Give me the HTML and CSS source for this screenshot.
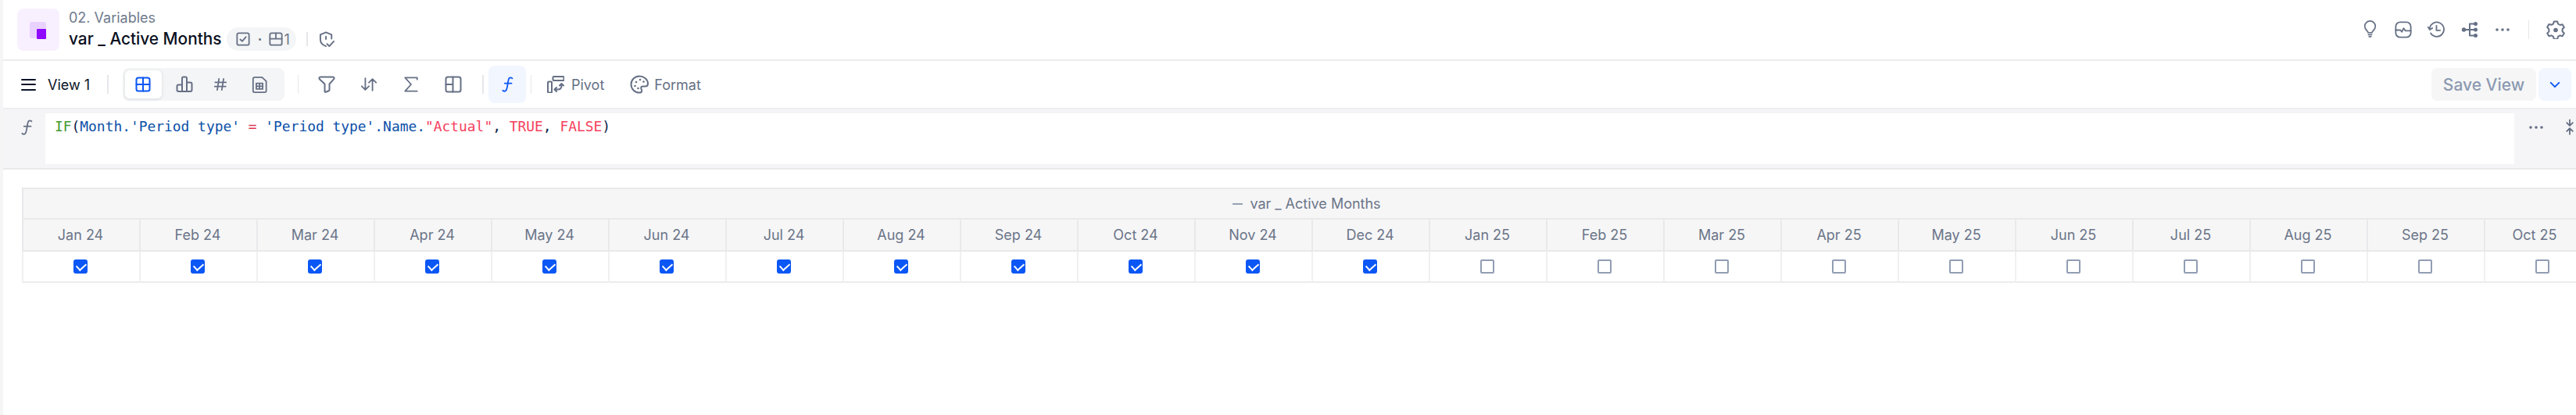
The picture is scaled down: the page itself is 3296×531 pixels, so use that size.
FILE: index.html
```html
<!DOCTYPE html>
<html lang="en">
<head>
<meta charset="utf-8">
<title>var _ Active Months</title>
<link rel="stylesheet" href="styles.css">
</head>
<body>
<svg class="defs" aria-hidden="true">
  <symbol id="i-grid" viewBox="0 0 20 20"><rect x="1.500" y="1.500" width="17" height="17" rx="2.500"/><path d="M10 1.500v17M1.500 10h17"/></symbol>
  <symbol id="i-bars" viewBox="0 0 22 22"><path d="M8 20V11.500H3.500a2 2 0 0 0-2 2V18a2 2 0 0 0 2 2H8zM8 20V3a1.500 1.500 0 0 1 1.500-1.500h3A1.500 1.500 0 0 1 14 3v17M14 8.500h4.500a2 2 0 0 1 2 2V18a2 2 0 0 1-2 2H14M8 20h6"/></symbol>
  <symbol id="i-hash" viewBox="0 0 20 20"><path d="M8 2 5.500 18M14.500 2 12 18M2.500 7H18M2 13h15.500"/></symbol>
  <symbol id="i-sheet" viewBox="0 0 22 24"><path d="M4 1.500h10.500L20.500 7v13.500a2 2 0 0 1-2 2H4a2 2 0 0 1-2-2v-17a2 2 0 0 1 2-2z"/><path d="M6.500 10h9v8h-9zM11 10v8M6.500 14h9"/></symbol>
  <symbol id="i-filter" viewBox="0 0 22 22"><path d="M3 1.500h16c1.500 0 2 1.500 1.200 2.700l-5.700 6.300v7.500c0 .6-.3 1-.8 1.200l-4 1.600c-.6.200-1.200-.2-1.200-.9V10.500L1.800 4.200C1 3 1.500 1.500 3 1.500z"/></symbol>
  <symbol id="i-sort" viewBox="0 0 24 20"><path d="M7 1.500v16M2 12.500l5 5 5-5M17 18.500v-16M12 7.500l5-5 5 5"/></symbol>
  <symbol id="i-sigma" viewBox="0 0 20 22"><path d="M18.500 4V1.500h-17L10 11l-8.500 9.500h17"/></symbol>
  <symbol id="i-layout" viewBox="0 0 22 22"><rect x="1.500" y="1.500" width="19" height="19" rx="2.500"/><path d="M10.500 1.500v19M1.500 11h9"/></symbol>
  <symbol id="i-fx" viewBox="0 0 16 22"><path d="M14.500 2.500C13.500 1.200 11 1 10 2.500 9 4 8.500 8 7.800 12.500 7.200 16.500 6.800 19 5 20.200c-1.200.8-3 .5-3.700-.7M4 9.500h9.500"/></symbol>
  <symbol id="i-pivot" viewBox="0 0 22 22"><rect x="7.500" y="1" width="14" height="5" rx="1"/><rect x="1" y="7.500" width="5" height="14" rx="1"/><path d="M10 17.500h3.500c3 0 5-1.500 5-5v-2M16 12.500l2.500-2.500 2.500 2.500M12 15l-2.500 2.500L12 20"/></symbol>
  <symbol id="i-shield" viewBox="0 0 22 22"><path d="M9.500 20C5 18.500 2 15.500 2 11V4.500L9.500 1.500 17 4.500V10M9.500 7v3.500M11 17l3 3 6-6.500"/></symbol>
  <symbol id="i-check" viewBox="0 0 20 20"><rect x="1.500" y="1.500" width="17" height="17" rx="2.500"/><path d="M6 10.500l3 2.500 5-6"/></symbol>
  <symbol id="i-split" viewBox="0 0 20 20"><rect x="1.500" y="1.500" width="17" height="17" rx="2.500"/><path d="M1.500 9.500h17M10 1.500v8"/></symbol>
  <symbol id="i-bulb" viewBox="0 0 20 24"><path d="M7 17c0-2.500-5-4.500-5-9.500a8 8 0 0 1 16 0c0 5-5 7-5 9.500zM7.500 20h5M8.500 23h3"/></symbol>
  <symbol id="i-pulse" viewBox="0 0 24 24"><rect x="1.500" y="1.500" width="21" height="21" rx="6"/><path d="M1.500 12.500h6.500l2 2.500 2.500-5 2.500 3.500h7.500"/></symbol>
  <symbol id="i-history" viewBox="0 0 24 24"><path d="M3 10.500a10 10 0 1 1 1.500 6.500M.8 8.500 3.200 12l3.500-2.200M12.500 6.500v6.500h5"/></symbol>
  <symbol id="i-tree" viewBox="0 0 22 22"><circle cx="3.500" cy="11" r="2.700" class="fill"/><circle cx="18.500" cy="3.500" r="2.500" class="fill"/><circle cx="18.500" cy="11" r="2.500" class="fill"/><circle cx="18.500" cy="18.500" r="2.500" class="fill"/><path d="M3.500 11h15M18.500 3.500H11v15h7.500"/></symbol>
  <symbol id="i-dots" viewBox="0 0 18 4"><circle cx="2" cy="2" r="1.800" class="fill"/><circle cx="9" cy="2" r="1.800" class="fill"/><circle cx="16" cy="2" r="1.800" class="fill"/></symbol>
  <symbol id="i-gear" viewBox="0 0 24 24"><path d="M9.800 1.500h4.400l.8 3 2.600 1.500 3-.8 2.200 3.800-2.200 2.200v3l2.200 2.200-2.200 3.800-3-.8-2.600 1.500-.8 3H9.800l-.8-3-2.600-1.500-3 .8L1.200 16.600 3.400 14.400v-3L1.200 8.800l2.200-3.800 3 .8L9 4.500z"/><circle cx="12" cy="12.500" r="2.800" class="fill"/></symbol>
  <symbol id="i-compress" viewBox="0 0 12 22"><path d="M6 0v8M1.500 4.500 6 9l4.500-4.500M6 22v-8M1.500 17.500 6 13l4.500 4.500"/></symbol>
</svg>

<div class="app">
  <header class="head">
    <div class="logo"><span class="logo-back"><span class="logo-front"></span></span></div>
    <div class="names">
      <div class="crumb">02. Variables</div>
      <div class="title-row">
        <h1 class="title">var _ Active Months</h1>
        <div class="chip">
          <svg class="ic ic-18"><use href="#i-check"/></svg>
          <span class="chip-dot">·</span>
          <svg class="ic ic-18"><use href="#i-split"/></svg>
          <span class="chip-num">1</span>
        </div>
        <span class="sep sep-head"></span>
        <svg class="ic ic-shield"><use href="#i-shield"/></svg>
      </div>
    </div>
    <div class="head-tools">
      <span class="tool-h"><svg class="ic ic-bulb"><use href="#i-bulb"/></svg></span>
      <span class="tool-h"><svg class="ic ic-22"><use href="#i-pulse"/></svg></span>
      <span class="tool-h"><svg class="ic ic-22"><use href="#i-history"/></svg></span>
      <span class="tool-h"><svg class="ic ic-22"><use href="#i-tree"/></svg></span>
      <span class="tool-h"><svg class="ic ic-dots"><use href="#i-dots"/></svg></span>
      <span class="sep sep-tools"></span>
      <span class="tool-h"><svg class="ic ic-24"><use href="#i-gear"/></svg></span>
    </div>
  </header>

  <nav class="bar">
    <span class="burger"><i></i><i></i><i></i></span>
    <span class="view-name">View 1</span>
    <span class="sep sep-view"></span>
    <div class="seg">
      <span class="seg-btn on"><svg class="ic ic-20 blue"><use href="#i-grid"/></svg></span>
      <span class="seg-btn b2"><svg class="ic ic-22"><use href="#i-bars"/></svg></span>
      <span class="seg-btn b3"><svg class="ic ic-18"><use href="#i-hash"/></svg></span>
      <span class="seg-btn b4"><svg class="ic ic-sheet"><use href="#i-sheet"/></svg></span>
    </div>
    <span class="sep sep-seg"></span>
    <span class="tool"><svg class="ic ic-22"><use href="#i-filter"/></svg></span>
    <span class="tool"><svg class="ic ic-sort"><use href="#i-sort"/></svg></span>
    <span class="tool"><svg class="ic ic-20"><use href="#i-sigma"/></svg></span>
    <span class="tool"><svg class="ic ic-22"><use href="#i-layout"/></svg></span>
    <span class="sep sep-fx1"></span>
    <span class="fx-btn"><svg class="ic ic-fx blue"><use href="#i-fx"/></svg></span>
    <span class="sep sep-fx2"></span>
    <span class="label-btn pivot"><svg class="ic ic-22"><use href="#i-pivot"/></svg>Pivot</span>
    <span class="label-btn format"><svg class="ic ic-24" viewBox="0 0 24 24"><path d="M12 1.500a10.500 10.500 0 1 0 0 21c2 0 3.200-1.200 3.200-2.600 0-1.500-1-2-1-3.200 0-1.300 1-2.200 2.400-2.200h3c2 0 3.400-1.500 3.400-3.500 0-5.500-5-9.500-11-9.500z"/><circle class="pal" cx="8" cy="9" r="1.300"/><circle class="pal" cx="13" cy="6" r="1.300"/><circle class="pal" cx="17.500" cy="8.500" r="1.300"/><circle class="pal" cx="6.500" cy="14" r="1.300"/><circle class="pal" cx="10.500" cy="17" r="1.300"/></svg>Format</span>
    <span class="save">Save View</span>
    <span class="save-more"><svg class="ic chev" viewBox="0 0 16 10"><path d="M2 2l6 6 6-6"/></svg></span>
  </nav>

  <section class="formula">
    <span class="fx-side"><svg class="ic ic-fx grey"><use href="#i-fx"/></svg></span>
    <div class="editor"><span class="k-fn">IF</span><span class="k-p">(</span><span class="k-id">Month.'Period type'</span> <span class="k-op">=</span> <span class="k-id">'Period type'.Name.</span><span class="k-str">"Actual"</span><span class="k-p">,</span> <span class="k-str">TRUE</span><span class="k-p">,</span> <span class="k-str">FALSE</span><span class="k-p">)</span></div>
    <span class="side-dots"><svg class="ic ic-dots"><use href="#i-dots"/></svg></span>
    <span class="side-comp"><svg class="ic ic-comp"><use href="#i-compress"/></svg></span>
  </section>

  <main class="sheet">
    <div class="table">
      <div class="group"><span class="minus"></span>var _ Active Months</div>
      <div class="hd">Jan 24</div><div class="hd">Feb 24</div><div class="hd">Mar 24</div><div class="hd">Apr 24</div><div class="hd">May 24</div><div class="hd">Jun 24</div><div class="hd">Jul 24</div><div class="hd">Aug 24</div><div class="hd">Sep 24</div><div class="hd">Oct 24</div><div class="hd">Nov 24</div><div class="hd">Dec 24</div><div class="hd">Jan 25</div><div class="hd">Feb 25</div><div class="hd">Mar 25</div><div class="hd">Apr 25</div><div class="hd">May 25</div><div class="hd">Jun 25</div><div class="hd">Jul 25</div><div class="hd">Aug 25</div><div class="hd">Sep 25</div><div class="hd hd-last">Oct 25</div>
      <div class="cell"><span class="cb on"></span></div><div class="cell"><span class="cb on"></span></div><div class="cell"><span class="cb on"></span></div><div class="cell"><span class="cb on"></span></div><div class="cell"><span class="cb on"></span></div><div class="cell"><span class="cb on"></span></div><div class="cell"><span class="cb on"></span></div><div class="cell"><span class="cb on"></span></div><div class="cell"><span class="cb on"></span></div><div class="cell"><span class="cb on"></span></div><div class="cell"><span class="cb on"></span></div><div class="cell"><span class="cb on"></span></div>
      <div class="cell"><span class="cb"></span></div><div class="cell"><span class="cb"></span></div><div class="cell"><span class="cb"></span></div><div class="cell"><span class="cb"></span></div><div class="cell"><span class="cb"></span></div><div class="cell"><span class="cb"></span></div><div class="cell"><span class="cb"></span></div><div class="cell"><span class="cb"></span></div><div class="cell"><span class="cb"></span></div><div class="cell"><span class="cb"></span></div>
    </div>
  </main>
</div>
</body>
</html>
```

FILE: styles.css
```css
* { box-sizing: border-box; }
html, body { margin: 0; height: 100%; overflow: hidden; background: #fff; }
body { font-family: Inter, "Liberation Sans", sans-serif; color: #6b7588; font-size: 18px; }
.defs { width: 0; height: 0; position: absolute; }
.app { width: 3296px; height: 531px; border-left: 4px solid #f5f5f6; overflow: hidden; }

.ic { display: block; fill: none; stroke: #667085; stroke-width: 2; stroke-linecap: round; stroke-linejoin: round; flex: none; overflow: visible; }
.fill { fill: #667085; stroke: none; }
.ic-18 { width: 18px; height: 18px; }
.ic-20 { width: 20px; height: 20px; }
.ic-22 { width: 22px; height: 22px; }
.ic-24 { width: 24px; height: 24px; }
.blue { stroke: #0b57f5; }
.grey { stroke: #667085; }

.sep { display: block; width: 2px; background: #e6e7ea; flex: none; }

.head { height: 78px; border-bottom: 2px solid #ececee; display: flex; align-items: flex-start; padding: 11px 0 0 18px; }
.logo { width: 54px; height: 54px; border-radius: 8px; background: #f8f0ff; display: flex; align-items: center; justify-content: center; flex: none; }
.logo-back { display: block; width: 21px; height: 21px; border-radius: 3px; background: #e9d2ff; margin-left: -1px; padding: 9px 0 0 9px; }
.logo-front { display: block; width: 12px; height: 13px; border-radius: 1px; background: #8f0aff; }
.names { margin-left: 12px; }
.crumb { font-size: 18px; line-height: 24px; color: #6f7a8c; }
.title-row { display: flex; align-items: center; height: 30px; }
.title { margin: 0; font-size: 20.800px; font-weight: 500; line-height: 30px; color: #0a0f1e; }
.chip { display: flex; align-items: center; height: 30px; margin-left: 7px; padding: 0 8px 0 12px; border-radius: 15px; background: #f4f5f6; font-size: 18px; }
.chip-dot { width: 24px; text-align: center; font-weight: 700; }
.chip-num { margin-left: 1px; }
.sep-head { height: 18px; margin-left: 13px; }
.ic-shield { width: 21px; height: 21px; margin-left: 14px; }
.head-tools { margin-left: auto; display: flex; align-items: center; height: 53px; padding-right: 5px; }
.tool-h { width: 42.500px; display: flex; justify-content: center; }
.ic-bulb { width: 17px; height: 23px; }
.ic-dots { width: 18px; height: 4px; }
.sep-tools { height: 24px; width: 1px; margin: 0 13px 0 11px; }

.bar { height: 60px; display: flex; align-items: center; position: relative; z-index: 1; box-shadow: 0 1px 2px #e6e6e8; padding-left: 23px; }
.burger { width: 19px; display: flex; flex-direction: column; gap: 4.500px; }
.burger i { display: block; height: 2px; background: #0a1428; border-radius: 1px; }
.view-name { margin-left: 15px; width: 54px; white-space: nowrap; color: #0a1428; }
.sep-view { height: 24px; margin-left: 22px; }
.seg { display: flex; align-items: center; height: 42px; width: 207px; margin-left: 18px; padding-left: 3px; background: #f4f5f6; border-radius: 8px; flex: none; }
.seg-btn { height: 36px; display: flex; align-items: center; justify-content: center; }
.seg-btn.on { width: 48px; background: #fff; border-radius: 6px; box-shadow: 0 1px 4px rgba(20, 30, 60, .12); }
.seg-btn.b2 { width: 60px; }
.seg-btn.b3 { width: 36px; }
.seg-btn.b4 { width: 66px; }
.ic-sheet { width: 20px; height: 23px; }
.sep-seg { height: 24px; margin-left: 17px; width: 1px; }
.tool { width: 54px; display: flex; justify-content: center; }
.sep-seg + .tool { margin-left: 9px; }
.ic-sort { width: 22px; height: 20px; }
.sep-fx1 { height: 24px; margin-left: 10px; }
.fx-btn { width: 48px; height: 48px; margin-left: 6px; border-radius: 8px; background: #f1f6ff; display: flex; align-items: center; justify-content: center; }
.ic-fx { width: 15px; height: 20px; }
.sep-fx2 { height: 24px; width: 1px; margin-left: 6px; }
.label-btn { display: flex; align-items: center; color: #667085; }
.pivot { margin-left: 20px; gap: 9px; }
.format { margin-left: 33px; gap: 7px; }
.pal { fill: #667085; stroke: none; }
.save { margin-left: auto; width: 134px; height: 42px; border-radius: 8px; background: #f6f6f7; color: #8c9ab1; font-size: 21px; font-weight: 500; display: flex; align-items: center; justify-content: center; }
.save-more { width: 42px; height: 42px; margin: 0 6px 0 3px; border-radius: 8px; background: #f1f6ff; display: flex; align-items: center; justify-content: center; }
.chev { width: 14px; height: 9px; stroke: #0b57f5; stroke-width: 2.200; }

.formula { height: 79px; background: #f5f5f7; border-bottom: 2px solid #e9e9eb; padding-top: 7px; display: flex; align-items: flex-start; }
.fx-side { width: 54px; display: flex; justify-content: center; padding: 8px 0 0 6px; }
.editor { width: 3159px; height: 65px; background: #fff; padding: 3px 12px; font-family: "DejaVu Sans Mono", "Liberation Mono", monospace; font-size: 17.900px; line-height: 28px; white-space: pre; color: #0b4fa8; flex: none; }
.k-fn { color: #3f9a2e; }
.k-p { color: #0b2048; }
.k-id { color: #0b4fa8; }
.k-op { color: #e0344f; }
.k-str { color: #f5405e; }
.side-dots { margin-left: 19px; padding-top: 16px; }
.side-comp { margin-left: 29px; padding-top: 7px; }
.ic-comp { width: 10px; height: 21px; stroke-width: 2.200; }

.sheet { padding: 23px 0 0 24px; }
.table { display: grid; grid-template-columns: repeat(22, 150px); width: 3300px; }
.group { grid-column: 1 / -1; height: 41px; background: #f6f6f7; border: 1px solid #e9e9eb; border-width: 2px 0 2px 2px; display: flex; align-items: center; justify-content: center; padding-right: 14px; color: #6b7588; }
.minus { display: block; width: 13px; height: 2px; background: #98a2b3; margin-right: 9px; }
.hd { height: 41px; padding-right: 2px; background: #f6f6f7; border-left: 2px solid #e9e9eb; border-bottom: 2px solid #e9e9eb; display: flex; align-items: center; justify-content: center; color: #6b7588; }
.hd-last { padding-right: 22px; }
.cell { height: 40px; padding-right: 2px; border-left: 2px solid #f0f0f1; border-bottom: 2px solid #ececee; display: flex; align-items: center; justify-content: center; }
.cb { display: block; position: relative; width: 18px; height: 18px; border: 2px solid #919db3; border-radius: 2px; background: #fff; }
.cb.on { background: #0b57f5; border-color: #0b57f5; border-radius: 3px; }
.cb.on::after { content: ""; position: absolute; left: 4px; top: 0; width: 6px; height: 10px; border: solid #fff; border-width: 0 2px 2px 0; transform: rotate(48deg); }
```
